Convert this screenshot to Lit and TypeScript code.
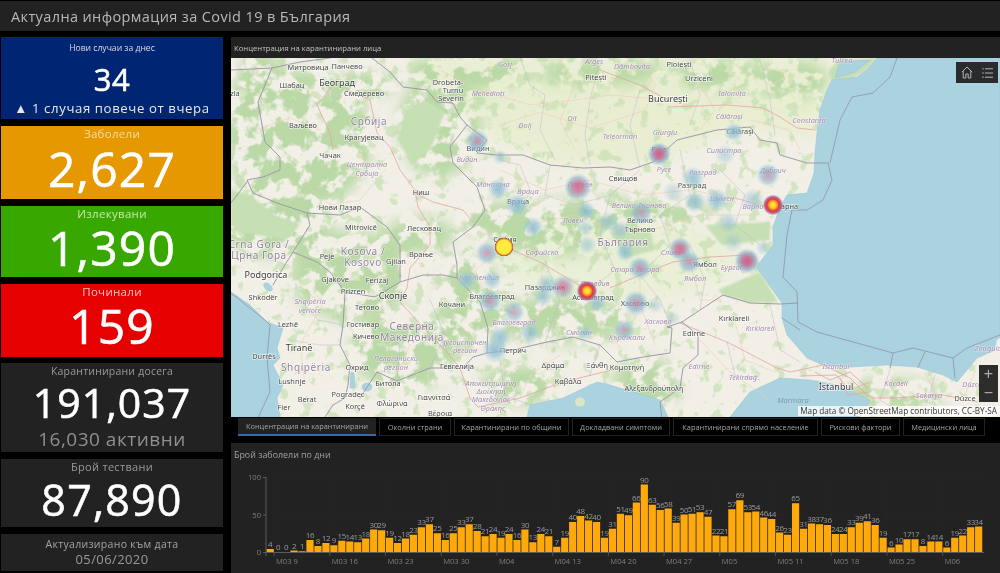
import { LitElement, css, html, svg } from 'lit';
import { customElement } from 'lit/decorators.js';

// [x, y, text] in page pixels, the map svg uses a viewBox with the same numbers
type Label = [number, number, string];

const CITIES: Label[] = [
  [308, 67, 'Митровица'], [347, 66, 'Панчево'], [292, 85, 'Шабац'], [364, 93, 'Смедерево'],
  [303, 125, 'Ваљево'], [364, 137, 'Крагујевац'], [330, 155, 'Чачак'], [421, 192, 'Ниш'],
  [340, 207, 'Нови Пазар'], [361, 227, 'Mitrovicë'], [424, 228, 'Лесковац'], [478, 148, 'Видин'],
  [518, 201, 'Враца'], [448, 82, 'Drobeta-'], [453, 90, 'Turnu'], [451, 98, 'Severin'],
  [596, 77, 'Pitești'], [235, 93, 'zla'], [623, 178, 'Свищов'], [679, 64, 'Ploiești'],
  [699, 78, 'Urziceni'], [740, 131, 'Călărași'], [659, 149, 'Русе'], [692, 185, 'Разград'],
  [787, 206, 'Варна'], [640, 220, 'Велико'], [640, 229, 'Търново'], [327, 256, 'Peje'],
  [396, 261, 'Gjilan'], [421, 254, 'Врање'], [335, 279, 'Gjakove'], [377, 280, 'Ferizaj'],
  [353, 291, 'Prizren'], [263, 297, 'Shkodër'], [367, 307, 'Тетово'], [452, 304, 'Кочани'],
  [363, 324, 'Гостивар'], [366, 336, 'Кичево'], [288, 324, 'Lezhë'], [264, 356, 'Durrës'],
  [292, 381, 'Lushnje'], [307, 399, 'Berat'], [284, 407, 'Fier'], [348, 394, 'Pogradec'],
  [355, 406, 'Korçë'], [357, 367, 'Охрид'], [388, 383, 'Битола'], [392, 403, 'Φλώρινα'],
  [457, 366, 'Гевгелија'], [513, 350, 'Петрич'], [492, 296, 'Благоевград'], [505, 239, 'София'],
  [545, 287, 'Пазарджик'], [593, 297, 'Асеновград'], [553, 365, 'Δράμα'], [597, 365, 'Ξάνθη'],
  [627, 367, 'Κομοτηνή'], [568, 381, 'Καβάλα'], [434, 397, 'Γιαννιτσά'], [440, 413, 'Βέροια'],
  [705, 264, 'Ямбол'], [635, 303, 'Хасково'], [734, 318, 'Kırklareli'], [694, 333, 'Edirne'],
  [654, 388, 'Αλεξανδρούπολη'], [965, 398, 'Düzce'],
];

const BIG_CITIES: Label[] = [
  [337, 83, 'Београд'], [668, 99, 'București'], [393, 296, 'Скопје'], [299, 348, 'Tiranë'],
  [266, 275, 'Podgorica'], [836, 387, 'İstanbul'],
];

const REGIONS: Label[] = [
  [367, 164, 'Централна'], [367, 173, 'Србија'], [467, 159, 'Видин'], [493, 184, 'Монтана'],
  [528, 191, 'Враца'], [573, 220, 'Ловеч'], [580, 184, 'Плевен'], [488, 93, 'Mehedinți'],
  [505, 64, 'Gorj'], [525, 125, 'Dolj'], [572, 118, 'Olt'], [620, 136, 'Teleorman'],
  [594, 61, 'Argeș'], [632, 66, 'Dâmbovița'], [732, 93, 'Ialomița'], [729, 116, 'Călărași'],
  [665, 132, 'Giurgiu'], [809, 120, 'Constanța'], [842, 60, 'Tulcea'], [724, 150, 'Силистра'],
  [664, 169, 'Русе'], [703, 172, 'Разград'], [773, 170, 'Добрич'], [722, 198, 'Шумен'],
  [753, 206, 'Варна'], [639, 205, 'Велико Търново'], [310, 301, 'Shqipëria'], [310, 310, 'veriore'],
  [396, 358, 'Пелагониски'], [396, 367, 'регион'], [465, 342, 'Југоисточен'], [465, 350, 'регион'],
  [514, 322, 'Благоевград'], [479, 277, 'Кюстендил'], [542, 252, 'Софийско'], [595, 283, 'Пловдив'],
  [579, 332, 'Смолян'], [627, 337, 'Кърджали'], [491, 383, 'Αποκεντρωμένη'], [491, 391, 'Διοίκηση'],
  [491, 399, 'Μακεδονίας'], [493, 408, 'Θράκης'], [635, 269, 'Стара Загора'], [673, 252, 'Сливен'],
  [695, 278, 'Ямбол'], [732, 267, 'Бургас'], [658, 321, 'Хасково'], [760, 328, 'Kırklareli'],
  [699, 366, 'Edirne'], [743, 377, 'Tekirdağ'], [836, 366, 'İstanbul'], [896, 383, 'Kocaeli'],
  [929, 395, 'Sakarya'], [972, 384, 'Düzce'], [992, 348, 'Zonguldak'],
];

const COUNTRIES: Label[] = [
  [369, 122, 'Србија'], [259, 245, 'Crna Gora /'], [259, 256, 'Црна Гора'], [363, 252, 'Kosova /'],
  [363, 263, 'Kosovo'], [412, 327, 'Северна'], [412, 338, 'Македонија'], [306, 368, 'Shqipëria'],
  [623, 243, 'България'],
];

const BORDERS = [
  'M390 72 403 87 427 90 437 102 453 103 460 117 467 125 487 140 477 153 497 155 523 155 550 165 583 168 610 167 630 170 653 162 677 140 717 130 750 127 760 140 777 143 780 155 807 163 828 163',
  'M467 125 450 147 453 163 477 187 485 210 473 227 453 242 457 265 457 278 480 302 488 328 487 353 513 350 547 342 573 337 600 345 617 362 643 357 670 353 672 328 667 327 682 322 697 312 723 295 750 303 780 304 798 303',
  'M682 322 698 335 698 355 683 368 680 388 660 402 662 420',
  'M487 353 473 357 463 368 430 368 397 381 377 372 360 398',
  'M273 285 283 268 293 252 317 262 330 272 345 292 343 325 340 345 350 365 348 385 345 398 333 405 323 420',
  'M345 292 375 297 400 282 423 275 443 275 457 278',
  'M272 68 258 102 265 142 280 157 280 170 263 177 247 180 253 193 277 203 307 213 340 215 360 207 387 227 400 245 400 282',
  'M231 70 272 68 300 62 330 58',
  'M390 72 372 58',
  'M293 252 310 225 307 213',
  'M231 203 247 182',
];

const SEA_LINES = [
  'M828 163 832 180 823 200 807 210 792 210 787 235 783 277 797 292 798 322 817 332 893 353 913 348 953 358 967 348 1000 335',
  'M897 58 890 77 873 93 852 97 840 120 830 163',
  'M231 293 265 320 270 325 267 358 270 392 257 420',
  'M782 318 800 330',
  'M893 353 890 368',
  'M925 352 918 367',
  'M953 358 955 378',
];

const ROADS = [
  'M337 80 317 105 330 133 333 150',
  'M347 90 370 100 377 133 390 147 400 170 415 190 418 207 430 227 430 245 410 268 407 288 400 302 430 335 447 352 460 368 470 398 478 407 520 398 563 382 620 368',
  'M415 193 433 202 463 210 473 222',
  'M680 323 727 342 777 368 790 372 823 365 850 378 870 398 893 398 943 395 977 402',
  'M668 107 727 105 763 108 780 117 797 128 815 130',
  'M610 288 640 275 673 262 710 257 747 255',
  'M735 198 763 206',
  'M505 247 540 262 587 290',
  'M600 70 640 85 668 100',
  'M800 376 836 375 850 390 870 382',
  'M815 372 830 380 850 372 868 388',
  'M840 378 848 395 868 392',
];

// minor roads, only a hint of the network
const MINOR = [
  'M440 70 480 90 530 105 575 100 610 95 668 100',
  'M500 125 540 112 590 128 640 112',
  'M560 60 575 85 560 120 575 150',
  'M640 60 655 85 640 125',
  'M700 85 715 110 700 130',
  'M730 62 770 85 790 75',
  'M750 120 790 130 800 150',
  'M500 170 545 190 590 180 640 195 690 190 735 198',
  'M530 225 575 215 620 232 660 228 700 215 760 215',
  'M480 230 505 247 475 270 490 300',
  'M540 262 545 300 530 335',
  'M587 295 600 330 625 350',
  'M640 275 640 305 655 345',
  'M690 262 700 300 720 300',
  'M300 180 330 205 360 200 385 170',
  'M255 130 290 118 320 130',
  'M300 285 322 305 300 345 305 385',
  'M360 310 385 320 410 345 395 380',
  'M735 322 745 360 775 372',
  'M700 340 730 372 770 400',
  'M890 375 905 392',
  'M925 372 935 394',
  'M975 372 965 395',
  'M520 398 530 375 560 355',
  'M620 368 625 390',
];

const REGION_LINES = [
  'M520 58 530 85 545 95 540 130 555 160',
  'M600 60 590 100 585 135 590 165',
  'M640 90 630 125 640 168',
  'M690 60 700 95 690 125',
  'M760 60 770 100 775 135',
  'M500 160 520 165 530 190 520 215',
  'M550 165 545 195 575 205 610 195 640 170',
  'M610 195 600 235 615 270 590 290',
  'M680 150 690 195 660 215 670 245 640 275',
  'M720 170 745 195 735 225 760 245',
  'M640 275 660 300 672 328',
  'M545 260 560 300 545 342',
  'M690 245 705 280 700 310',
  'M727 342 735 375 760 380',
  'M770 305 780 350 800 362',
  'M430 300 445 335 430 368',
  'M375 325 400 345 397 381',
  'M300 300 318 320 343 325',
  'M290 340 320 345 340 345',
  'M500 360 505 395 530 405',
  'M600 345 590 375',
  'M890 370 880 400 900 412',
  'M935 375 925 410',
];

// heat points: x, y, radius, gradient id, opacity
const HEAT: [number, number, number, string, number][] = [
  [477, 141, 12, 'warm', 0.95], [500, 157, 8, 'cool', 0.6], [498, 189, 11, 'cool', 0.95], [517, 205, 12, 'cool', 1],
  [578, 187, 14, 'pink', 0.85], [586, 211, 10, 'cool', 0.95], [608, 222, 11, 'cool', 0.65], [533, 227, 11, 'cool', 0.9],
  [585, 228, 9, 'cool', 0.6], [734, 132, 10, 'cool', 0.95], [659, 154, 12, 'pink', 1], [725, 155, 11, 'cool', 0.5],
  [693, 178, 12, 'cool', 0.85], [768, 175, 12, 'warm', 0.85], [717, 200, 12, 'cool', 0.9], [695, 202, 11, 'cool', 0.9],
  [673, 192, 11, 'cool', 0.45], [753, 200, 12, 'cool', 0.6], [641, 213, 12, 'warm', 0.85], [728, 223, 11, 'cool', 0.65],
  [620, 230, 10, 'cool', 0.7], [733, 242, 11, 'cool', 0.45], [587, 245, 10, 'cool', 0.6], [487, 253, 12, 'warm', 0.85],
  [467, 280, 10, 'cool', 0.95], [492, 280, 10, 'cool', 0.8], [490, 301, 12, 'warm', 0.9], [514, 312, 11, 'warm', 0.75],
  [547, 285, 12, 'cool', 0.75], [563, 287, 12, 'pink', 0.7], [543, 297, 10, 'cool', 0.75], [597, 303, 10, 'cool', 0.8],
  [530, 333, 11, 'cool', 0.85], [500, 337, 11, 'cool', 0.9], [495, 350, 13, 'cool', 0.95], [585, 333, 8, 'cool', 0.7],
  [625, 252, 10, 'cool', 0.9], [680, 249, 12, 'pink', 0.85], [689, 262, 12, 'warm', 0.9], [640, 268, 12, 'warm', 0.95],
  [747, 261, 13, 'pink', 1], [763, 248, 8, 'cool', 0.5], [636, 303, 13, 'warm', 0.95], [655, 305, 9, 'cool', 0.45],
  [624, 330, 11, 'warm', 0.8], [673, 318, 8, 'cool', 0.4], [773, 205, 10.5, 'hot', 1], [587, 291, 10.5, 'hot', 1],
  [504, 247, 9.5, 'sun', 1],
];

const GREEN_AREAS: [number, number, number, number][] = [
  [300, 140, 72, 70], [262, 130, 34, 80], [275, 225, 55, 32], [440, 125, 42, 52], [350, 275, 60, 45],
  [405, 350, 55, 40], [600, 215, 120, 16], [560, 320, 70, 24], [470, 300, 32, 45], [470, 72, 65, 18],
  [600, 72, 65, 14], [520, 385, 40, 20], [645, 385, 34, 28], [420, 235, 34, 18], [360, 85, 34, 14],
  [720, 75, 45, 16], [790, 80, 38, 20], [550, 240, 55, 16], [890, 395, 55, 16], [500, 220, 40, 18],
];

const SOLID_GREEN = [
  'M838 60 877 58 865 72 850 79 832 82 828 72Z',
  'M718 290 745 278 760 272 778 302 750 303 723 295Z',
  'M610 232 650 232 655 250 625 258Z',
  'M705 225 770 222 770 240 722 245Z',
  'M231 190 250 195 275 215 300 225 285 240 240 232 231 225Z',
  'M405 110 425 100 445 112 430 150 412 165 398 140Z',
];

const DAILY = [
  4, 0, 0, 2, 1, 16, 8, 12, 9, 15, 14, 13, 18, 30, 29, 19, 12, 18, 23, 33, 37, 25, 16, 25, 33, 37, 28, 21, 24, 19,
  24, 16, 30, 13, 24, 21, 7, 19, 40, 48, 42, 40, 19, 31, 51, 49, 66, 90, 63, 56, 58, 39, 50, 51, 53, 47, 22, 21,
  57, 69, 53, 54, 46, 44, 26, 23, 65, 31, 38, 37, 36, 24, 24, 33, 39, 41, 36, 19, 6, 10, 17, 17, 8, 14, 14, 6, 19,
  22, 33, 34,
];

const WEEKS = [
  'M03 9', 'M03 16', 'M03 23', 'M03 30', 'M04', 'M04 13', 'M04 20', 'M04 27', 'M05', 'M05 11', 'M05 18', 'M05 25', 'M06',
];

const TABS: [string, number][] = [
  ['Концентрация на карантинирани', 138], ['Околни страни', 72], ['Карантинирани по общини', 115],
  ['Докладвани симптоми', 98], ['Карантинирани спрямо население', 145], ['Рискови фактори', 79], ['Медицински лица', 82],
];

@customElement('covid-map')
export class CovidMap extends LitElement {
  static styles = css`
    :host {
      display: block;
      position: relative;
      flex: 1;
      overflow: hidden;
      background: #aad3df;
    }
    svg.base {
      display: block;
      width: 769px;
      height: 359px;
      filter: blur(0.35px);
    }
    text {
      font-family: 'Noto Sans', 'DejaVu Sans', sans-serif;
      text-anchor: middle;
      paint-order: stroke;
      stroke-linejoin: round;
    }
    .city {
      font-size: 7.4px;
      fill: #484848;
      stroke: rgba(255, 255, 255, 0.7);
      stroke-width: 1.3px;
    }
    .big {
      font-size: 9px;
      fill: #3a3a3a;
      stroke: rgba(255, 255, 255, 0.75);
      stroke-width: 1.5px;
    }
    .region {
      font-size: 7.4px;
      font-style: italic;
      fill: #a58bb0;
      stroke: rgba(255, 255, 255, 0.45);
      stroke-width: 1.2px;
    }
    .country {
      font-size: 10px;
      letter-spacing: 0.6px;
      fill: #93829f;
      stroke: rgba(255, 255, 255, 0.6);
      stroke-width: 1.4px;
    }
    .sea-name {
      font-size: 7.5px;
      font-style: italic;
      fill: #7f9db0;
    }
    .tools {
      position: absolute;
      top: 4px;
      right: 2px;
      width: 42px;
      height: 21px;
      display: flex;
      align-items: center;
      justify-content: space-around;
      background: rgba(34, 34, 34, 0.95);
    }
    .zoom {
      position: absolute;
      right: 2px;
      bottom: 15px;
      width: 19px;
      height: 37px;
      display: flex;
      flex-direction: column;
      align-items: center;
      justify-content: space-around;
      background: rgba(34, 34, 34, 0.95);
      color: #adadad;
      font: 16px/1 'Liberation Sans', sans-serif;
    }
    .attribution {
      position: absolute;
      right: 0;
      bottom: 1px;
      padding: 0 3px 0 2px;
      background: rgba(255, 255, 255, 0.75);
      color: #333;
      font: 8.2px/10px 'Open Sans', 'Noto Sans', sans-serif;
      white-space: nowrap;
    }
  `;

  private labels(list: Label[], cls: string) {
    return list.map(([x, y, t]) => svg`<text class=${cls} x=${x} y=${y + 3}>${t}</text>`);
  }

  render() {
    return html`
      <svg class="base" viewBox="231 58 769 359" xmlns="http://www.w3.org/2000/svg">
        <defs>
          <filter id="patches" x="0" y="0" width="100%" height="100%" color-interpolation-filters="sRGB">
            <feTurbulence type="fractalNoise" baseFrequency="0.055" numOctaves="4" seed="11" />
            <feColorMatrix values="0 0 0 0 0.73  0 0 0 0 0.85  0 0 0 0 0.65  9 0 0 0 -3.9" />
          </filter>
          <filter id="specks" x="0" y="0" width="100%" height="100%" color-interpolation-filters="sRGB">
            <feTurbulence type="fractalNoise" baseFrequency="0.08" numOctaves="3" seed="4" />
            <feColorMatrix values="0 0 0 0 0.78  0 0 0 0 0.88  0 0 0 0 0.7  10 0 0 0 -5.9" />
          </filter>
          <filter id="soft"><feGaussianBlur stdDeviation="7" /></filter>
          <filter id="tiny"><feGaussianBlur stdDeviation="0.8" /></filter>
          <mask id="greens" maskUnits="userSpaceOnUse" x="231" y="58" width="769" height="359">
            <g filter="url(#soft)" fill="#fff">
              ${GREEN_AREAS.map(([x, y, rx, ry]) => svg`<ellipse cx=${x} cy=${y} rx=${rx} ry=${ry} />`)}
            </g>
          </mask>
          <radialGradient id="cool">
            <stop offset="0" stop-color="#86b8cd" stop-opacity="0.9" />
            <stop offset="0.5" stop-color="#93c0d2" stop-opacity="0.65" />
            <stop offset="1" stop-color="#a5cfdc" stop-opacity="0" />
          </radialGradient>
          <radialGradient id="warm">
            <stop offset="0" stop-color="#c8869f" stop-opacity="0.9" />
            <stop offset="0.25" stop-color="#a895b5" stop-opacity="0.8" />
            <stop offset="0.6" stop-color="#8ab7cd" stop-opacity="0.7" />
            <stop offset="1" stop-color="#a5cfdc" stop-opacity="0" />
          </radialGradient>
          <radialGradient id="pink">
            <stop offset="0" stop-color="#cf5f84" />
            <stop offset="0.38" stop-color="#c0789c" stop-opacity="0.95" />
            <stop offset="0.7" stop-color="#8fadc9" stop-opacity="0.7" />
            <stop offset="1" stop-color="#a5cfdc" stop-opacity="0" />
          </radialGradient>
          <radialGradient id="hot">
            <stop offset="0" stop-color="#fff23c" />
            <stop offset="0.3" stop-color="#fbc531" />
            <stop offset="0.58" stop-color="#e4392f" />
            <stop offset="0.8" stop-color="#b6528f" stop-opacity="0.85" />
            <stop offset="1" stop-color="#86a9c8" stop-opacity="0" />
          </radialGradient>
          <radialGradient id="sun">
            <stop offset="0" stop-color="#fdf03e" />
            <stop offset="0.74" stop-color="#fde93a" />
            <stop offset="0.86" stop-color="#e88f2c" />
            <stop offset="0.95" stop-color="#a8502f" />
            <stop offset="1" stop-color="#a8502f" stop-opacity="0" />
          </radialGradient>
        </defs>

        <rect x="231" y="58" width="769" height="359" fill="#f2efe7" />
        <g filter="url(#soft)" opacity="0.75">
          <path d="M400 58H830L815 140 740 128 650 165 560 165 490 138 460 105Z" fill="#e6eecb" />
          <ellipse cx="620" cy="260" rx="120" ry="40" fill="#e8efd2" />
        </g>
        <rect x="231" y="58" width="769" height="359" filter="url(#specks)" opacity="0.7" />
        <rect x="231" y="58" width="769" height="359" filter="url(#patches)" mask="url(#greens)" />
        <g fill="#c6dfb3" filter="url(#tiny)">${SOLID_GREEN.map((d) => svg`<path d=${d} />`)}</g>

        <g fill="#aad3df" stroke="#9cc6d6" stroke-width="0.6">
          <path d="M877 58 867 70 857 77 832 80 827 90 820 110 817 133 815 153 814 173 807 193 787 195 780 207 773 227 773 245 760 262 757 268 767 282 782 303 782 318 787 335 807 358 823 365 850 367 887 365 917 367 943 375 957 382 977 358 1000 348V58Z" />
          <path d="M780 378 810 380 837 385 870 400 867 406 845 411 860 417H730L750 392Z" />
          <path d="M527 417 530 405 563 398 597 382 610 385 630 391 660 400 668 417Z" />
          <path d="M231 292 250 305 267 322 283 328 277 348 280 358 273 365 283 385 277 398 280 417H231Z" />
          <path d="M351 372 354 373 355 388 350 388Z" />
          <ellipse cx="367" cy="387" rx="5" ry="4" />
          <ellipse cx="268" cy="287" rx="5" ry="3" transform="rotate(40 268 287)" />
          <path d="M870 60 840 62 835 78 855 72Z" />
        </g>
        <ellipse cx="580" cy="402" rx="5" ry="4.5" fill="#d9e6c4" />
        <path d="M997 340 1000 338V417H978L984 385 990 370Z" fill="#f2efe7" />

        <g fill="none" stroke-linejoin="round" stroke-linecap="round">
          <g stroke="#efcdb6" stroke-width="0.6">${MINOR.map((d) => svg`<path d=${d} />`)}</g>
          <g stroke="#bdb2c6" stroke-width="0.5" stroke-dasharray="2 1">${REGION_LINES.map((d) => svg`<path d=${d} />`)}</g>
          <g stroke="#e7a3a3" stroke-width="0.8">${ROADS.map((d) => svg`<path d=${d} />`)}</g>
          <g stroke="#959aaa" stroke-width="0.9">${SEA_LINES.map((d) => svg`<path d=${d} />`)}</g>
          <g stroke="#a09aaa" stroke-width="1">${BORDERS.map((d) => svg`<path d=${d} />`)}</g>
        </g>

        ${this.labels(REGIONS, 'region')}
        ${this.labels(CITIES, 'city')}
        ${this.labels(BIG_CITIES, 'big')}
        ${this.labels(COUNTRIES, 'country')}
        <text class="sea-name" x="793" y="403">Marmara</text>

        ${HEAT.map(([x, y, r, id, o]) => svg`<circle cx=${x} cy=${y} r=${r} fill="url(#${id})" opacity=${o} />`)}
      </svg>

      <div class="tools">
        <svg width="12" height="13" viewBox="0 0 12 13" fill="none" stroke="#b4b4b4" stroke-width="1">
          <path d="M.8 6.2 6 1l5.2 5.2M2.2 5.2V12h2.6V8h2.4v4h2.6V5.2" />
        </svg>
        <svg width="11" height="12" viewBox="0 0 11 12" fill="none" stroke="#b4b4b4" stroke-width="1">
          <path d="M1 1v1.6M1 5.2v1.6M1 9.4V11M3 1.8h8M3 6h8M3 10.2h8" />
        </svg>
      </div>
      <div class="zoom"><span>+</span><span>−</span></div>
      <div class="attribution">Map data © OpenStreetMap contributors, CC-BY-SA</div>
    `;
  }
}

@customElement('daily-chart')
export class DailyChart extends LitElement {
  static styles = css`
    :host {
      display: block;
    }
    svg {
      display: block;
      width: 769px;
      height: 130px;
    }
    text {
      font-family: 'Open Sans', 'Noto Sans', sans-serif;
    }
    .value {
      font-size: 8px;
      fill: #9a9a9a;
      text-anchor: middle;
      letter-spacing: -0.3px;
    }
    .axis {
      font-size: 7.6px;
      fill: #7f7f7f;
    }
  `;

  render() {
    const baseY = 552;
    const step = 7.96;
    const scale = 0.75;
    const tick = (i: number) => 274 + i * 7 * step;
    return html`
      <svg viewBox="231 443 769 130" xmlns="http://www.w3.org/2000/svg">
        ${WEEKS.map(
          (_, i) => svg`<line x1=${tick(i)} x2=${tick(i)} y1="477" y2="552" stroke="#2e2e2e" stroke-width="0.6" stroke-dasharray="1 2" />`
        )}
        ${[477, 514.5].map(
          (y) => svg`<line x1="266" x2="984" y1=${y} y2=${y} stroke="#2e2e2e" stroke-width="0.6" stroke-dasharray="1 2" />`
        )}
        ${DAILY.map((v, i) => {
          const x = 266.6 + i * step;
          const h = v * scale;
          return svg`
            <rect x=${x} y=${baseY - h} width="7.2" height=${h} fill="#ffa90a" />
            <text class="value" x=${x + 3.6} y=${baseY - h - 2}>${v}</text>
          `;
        })}
        <line x1="266" x2="266" y1="477" y2="556" stroke="#5c5c5c" />
        <line x1="263" x2="984" y1="552.5" y2="552.5" stroke="#5c5c5c" />
        <line x1="263" x2="266" y1="477.5" y2="477.5" stroke="#5c5c5c" />
        <line x1="263" x2="266" y1="515" y2="515" stroke="#5c5c5c" />
        ${[['100', 480], ['50', 518], ['0', 555]].map(
          ([t, y]) => svg`<text class="axis" x="261" y=${y} text-anchor="end">${t}</text>`
        )}
        ${WEEKS.map(
          (w, i) => svg`
            <line x1=${tick(i)} x2=${tick(i)} y1="552" y2="556" stroke="#5c5c5c" stroke-width="0.8" />
            <text class="axis" x=${tick(i) + 2} y="564">${w}</text>
          `
        )}
      </svg>
    `;
  }
}

@customElement('app-root')
export class AppRoot extends LitElement {
  static styles = css`
    :host {
      display: block;
      width: 1000px;
      height: 573px;
      overflow: hidden;
      background: #000;
      font-family: 'Open Sans', 'Noto Sans', sans-serif;
      filter: blur(0.3px);
    }
    .title {
      height: 30px;
      margin-top: 1px;
      padding-left: 11px;
      display: flex;
      align-items: center;
      background: #222;
      color: #b9b9b9;
      font-size: 14.5px;
      letter-spacing: 0.38px;
    }
    .body {
      display: flex;
      gap: 8px;
      margin-top: 6px;
      padding-left: 1px;
    }
    .side {
      width: 222px;
      display: flex;
      flex-direction: column;
      gap: 7px;
    }
    .card {
      display: flex;
      flex-direction: column;
      align-items: center;
      color: #fff;
      white-space: nowrap;
    }
    .label {
      font-size: 11.5px;
      line-height: 16px;
      letter-spacing: 0.3px;
    }
    .num {
      font-size: 48px;
      line-height: 56px;
      letter-spacing: 1.2px;
      -webkit-text-stroke: 0.6px currentColor;
    }
    .today { height: 82px; background: #002673; }
    .today .label { font-size: 8.6px; line-height: 22px; letter-spacing: 0; color: #dcdcdc; }
    .today .num { font-size: 31px; line-height: 40px; letter-spacing: 0.5px; }
    .today .sub { font-size: 13.2px; line-height: 18px; letter-spacing: 0.6px; color: #e8e8e8; }
    .sick { height: 73px; background: #e69800; }
    .sick .label { color: #f6dca6; }
    .cured { height: 71px; background: #38a800; }
    .cured .label { color: #c5e8ad; }
    .dead { height: 73px; background: #e60000; }
    .dead .label { color: #f8c4c4; }
    .sick .num { margin-top: -1px; }
    .cured .num, .dead .num { margin-top: -2px; }
    .dark { background: #222; }
    .dark .label { color: #999; }
    .quarantine { height: 89px; margin-top: -1px; }
    .quarantine .label { font-size: 10.5px; letter-spacing: 0.2px; }
    .quarantine .num { font-size: 41px; line-height: 46px; letter-spacing: 1px; }
    .quarantine .sub { font-size: 19px; line-height: 26px; margin-top: 1px; color: #8f8f8f; letter-spacing: 0.5px; }
    .tested { height: 68px; }
    .tested .label { font-size: 11px; }
    .tested .num { font-size: 43px; line-height: 50px; }
    .updated { height: 37px; }
    .updated .label { font-size: 10.5px; line-height: 15px; margin-top: 3px; color: #a3a3a3; }
    .updated .date { font-size: 13px; line-height: 15px; color: #999; letter-spacing: 0.4px; }
    .main {
      width: 769px;
      display: flex;
      flex-direction: column;
    }
    .map-panel {
      height: 380px;
      display: flex;
      flex-direction: column;
    }
    .panel-title {
      height: 21px;
      padding-left: 3px;
      display: flex;
      align-items: center;
      background: #222;
      color: #c4c4c4;
      font-size: 7.7px;
    }
    .tabs {
      display: flex;
      gap: 3px;
      height: 18px;
      margin-top: 1px;
      padding-left: 7px;
    }
    .tab {
      display: flex;
      align-items: center;
      justify-content: center;
      box-sizing: border-box;
      border: 1px solid #222;
      color: #a3a3a3;
      font-size: 7.4px;
      white-space: nowrap;
    }
    .tab.on {
      background: #222;
      border: 0;
      border-bottom: 2px solid #2f6ea5;
    }
    .chart-panel {
      margin-top: 7px;
      height: 130px;
      position: relative;
      background: #222;
    }
    .chart-title {
      position: absolute;
      left: 3px;
      top: 5px;
      color: #a0a0a0;
      font-size: 8.9px;
    }
  `;

  render() {
    return html`
      <div class="title">Актуална информация за Covid 19 в България</div>
      <div class="body">
        <div class="side">
          <div class="card today">
            <div class="label">Нови случаи за днес</div>
            <div class="num">34</div>
            <div class="sub">▲ 1 случая повече от вчера</div>
          </div>
          <div class="card sick"><div class="label">Заболели</div><div class="num">2,627</div></div>
          <div class="card cured"><div class="label">Излекувани</div><div class="num">1,390</div></div>
          <div class="card dead"><div class="label">Починали</div><div class="num">159</div></div>
          <div class="card dark quarantine">
            <div class="label">Карантинирани досега</div>
            <div class="num">191,037</div>
            <div class="sub">16,030 активни</div>
          </div>
          <div class="card dark tested"><div class="label">Брой тествани</div><div class="num">87,890</div></div>
          <div class="card dark updated">
            <div class="label">Актуализирано към дата</div>
            <div class="date">05/06/2020</div>
          </div>
        </div>
        <div class="main">
          <div class="map-panel">
            <div class="panel-title">Концентрация на карантинирани лица</div>
            <covid-map></covid-map>
          </div>
          <div class="tabs">
            ${TABS.map(
              ([t, w], i) => html`<div class="tab ${i === 0 ? 'on' : ''}" style="width:${w}px">${t}</div>`
            )}
          </div>
          <div class="chart-panel">
            <daily-chart></daily-chart>
            <div class="chart-title">Брой заболели по дни</div>
          </div>
        </div>
      </div>
    `;
  }
}
